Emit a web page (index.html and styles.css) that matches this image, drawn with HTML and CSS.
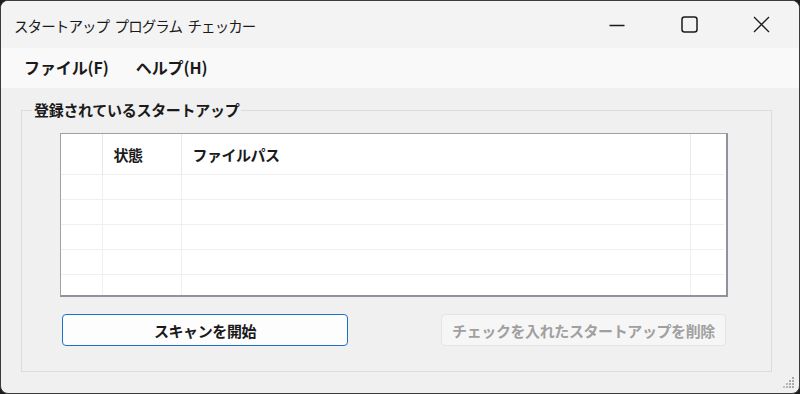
FILE: index.html
```html
<!DOCTYPE html>
<html lang="ja">
<head>
    <meta charset="UTF-8">
    <meta name="viewport" content="width=device-width, initial-scale=1.0">
    <title>スタートアップ プログラム チェッカー</title>
    <link rel="stylesheet" href="styles.css">
</head>
<body>
    <div class="window">
        <div class="titlebar">
            <div class="title">スタートアップ プログラム チェッカー</div>
            <div class="caption-buttons">
                <div class="caption-btn">
                    <svg width="16" height="16" viewBox="0 0 16 16"><path d="M0.5 8.5 H15.5" stroke="#1b1b1b" stroke-width="1.3" fill="none"/></svg>
                </div>
                <div class="caption-btn">
                    <svg width="17" height="17" viewBox="0 0 17 17"><rect x="1" y="1" width="15" height="15" rx="2.5" stroke="#1b1b1b" stroke-width="1.5" fill="none"/></svg>
                </div>
                <div class="caption-btn">
                    <svg width="17" height="17" viewBox="0 0 17 17"><path d="M1 1 L16 16 M16 1 L1 16" stroke="#1b1b1b" stroke-width="1.3" fill="none"/></svg>
                </div>
            </div>
        </div>

        <div class="menubar">
            <span class="menu-item">ファイル(F)</span>
            <span class="menu-item">ヘルプ(H)</span>
        </div>

        <div class="content">
            <fieldset class="group">
                <legend>登録されているスタートアップ</legend>
                <div class="group-inner">
                    <div class="listview">
                        <table>
                            <tr class="header">
                                <th class="col-check"></th>
                                <th class="col-state">状態</th>
                                <th class="col-path">ファイルパス</th>
                                <th class="col-rest"></th>
                            </tr>
                            <tr><td></td><td></td><td></td><td></td></tr>
                            <tr><td></td><td></td><td></td><td></td></tr>
                            <tr><td></td><td></td><td></td><td></td></tr>
                            <tr><td></td><td></td><td></td><td></td></tr>
                            <tr><td></td><td></td><td></td><td></td></tr>
                        </table>
                    </div>
                    <div class="buttons">
                        <button class="btn primary">スキャンを開始</button>
                        <button class="btn" disabled>チェックを入れたスタートアップを削除</button>
                    </div>
                </div>
            </fieldset>
        </div>

        <svg class="grip" width="14" height="14" viewBox="0 0 14 14">
            <rect x="10" y="0" width="2" height="2" fill="#a9a9a9"/>
            <rect x="7" y="3" width="2" height="2" fill="#a9a9a9"/>
            <rect x="10" y="3" width="2" height="2" fill="#a9a9a9"/>
            <rect x="4" y="6" width="2" height="2" fill="#b5b5b5"/>
            <rect x="7" y="6" width="2" height="2" fill="#a9a9a9"/>
            <rect x="10" y="6" width="2" height="2" fill="#a9a9a9"/>
            <rect x="1" y="9" width="2" height="2" fill="#c0c0c0"/>
            <rect x="4" y="9" width="2" height="2" fill="#b5b5b5"/>
            <rect x="7" y="9" width="2" height="2" fill="#a9a9a9"/>
            <rect x="10" y="9" width="2" height="2" fill="#a9a9a9"/>
        </svg>
    </div>
</body>
</html>
```

FILE: styles.css
```css
* {
    box-sizing: border-box;
}
body {
    margin: 0;
    background: #1c1c1c;
    font-family: "Noto Sans CJK JP", "Noto Sans", sans-serif;
    color: #1a1a1a;
}
.window {
    position: relative;
    width: 800px;
    height: 394px;
    border: 1px solid #3a3a3a;
    border-radius: 8px;
    overflow: hidden;
    background: #f0f0f0;
    display: flex;
    flex-direction: column;
}
.titlebar {
    height: 47px;
    background: #f3f3f3;
    display: flex;
    align-items: center;
    justify-content: space-between;
    flex-shrink: 0;
}
.title {
    padding-left: 13px;
    padding-top: 1px;
    font-size: 14.5px;
    letter-spacing: -0.9px;
    word-spacing: 3px;
}
.caption-buttons {
    display: flex;
    height: 100%;
    padding-right: 2px;
}
.caption-btn {
    width: 72px;
    height: 100%;
    display: flex;
    align-items: center;
    justify-content: center;
}
.menubar {
    height: 40px;
    background: #f9f9f9;
    display: flex;
    align-items: center;
    padding-left: 8px;
    padding-bottom: 2px;
    flex-shrink: 0;
}
.menu-item {
    padding: 0 15px;
    font-size: 16px;
    font-weight: 700;
    letter-spacing: -0.1px;
}
.menu-item + .menu-item {
    padding-left: 12px;
}
.content {
    flex: 1;
    padding: 12px 27px 0 20px;
}
.group {
    margin: 0;
    padding: 0;
    border: 1px solid #dcdcdc;
}
.group legend {
    margin-left: 10px;
    padding: 0 2px;
    font-size: 15px;
    font-weight: 700;
    line-height: 20px;
    letter-spacing: -0.3px;
}
.group-inner {
    padding: 13px 43px 25px 38px;
}
.listview {
    height: 164px;
    background: #fff;
    border-top: 1px solid #9ea2a8;
    border-left: 1px solid #9ea2a8;
    border-right: 2px solid #8e939a;
    border-bottom: 2px solid #8e939a;
    overflow: hidden;
}
table {
    width: 663px;
    border-collapse: collapse;
    table-layout: fixed;
}
th {
    height: 40px;
    padding: 2px 0 0 11px;
    text-align: left;
    font-size: 15px;
    font-weight: 700;
    letter-spacing: -0.5px;
    border-right: 1px solid #e8e8e8;
}
th:last-child,
td:last-child {
    border-right: none;
}
.col-check {
    width: 41px;
}
.col-state {
    width: 79px;
}
.col-path {
    width: 509px;
}
td {
    height: 25px;
    border-right: 1px solid #efefef;
    border-top: 1px solid #efefef;
}
.buttons {
    display: flex;
    justify-content: space-between;
    padding: 17px 2px 0 2px;
}
.btn {
    width: 285px;
    height: 32px;
    font-family: "Noto Sans CJK JP", "Noto Sans", sans-serif;
    font-size: 15px;
    font-weight: 700;
    letter-spacing: -0.4px;
    border-radius: 4px;
    border: 1px solid #e4e4e4;
    background: #f6f6f6;
    color: #a0a0a0;
    padding: 0;
}
.btn.primary {
    width: 286px;
    border: 1px solid #1a73c8;
    background: #fdfdfd;
    color: #1a1a1a;
}
.grip {
    position: absolute;
    right: 3px;
    bottom: 2px;
}
```
